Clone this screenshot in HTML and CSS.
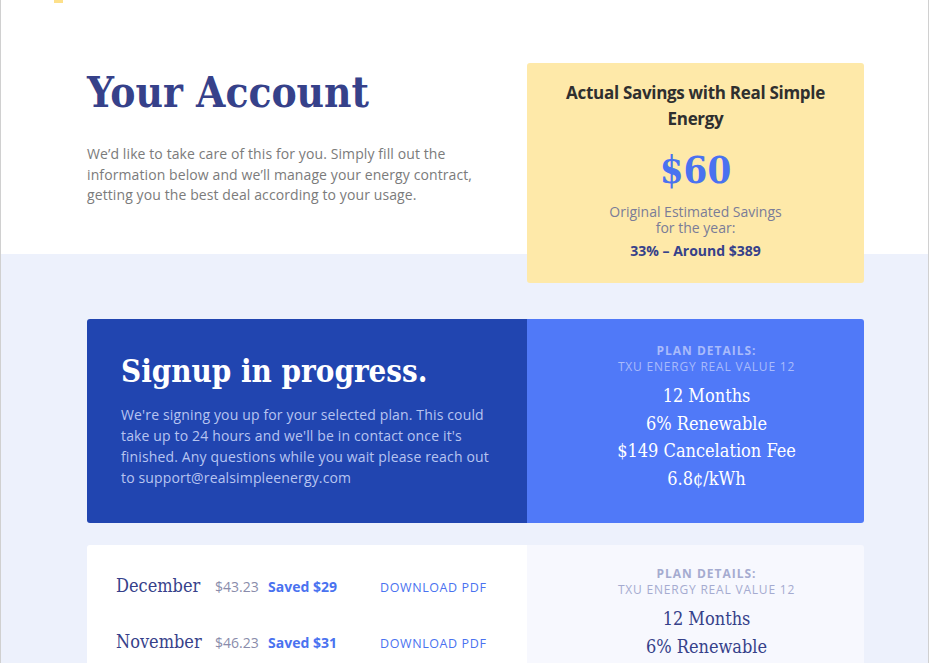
FILE: index.html
```html
<!DOCTYPE html>
<html lang="en">
<head>
<meta charset="utf-8">
<title>Your Account</title>
<link rel="stylesheet" href="styles.css">
</head>
<body>
<div class="frame">
  <div class="accent"></div>
  <div class="container">
    <section class="hero">
      <div class="intro">
        <h1 class="title">Your Account</h1>
        <p class="lead">We’d like to take care of this for you. Simply fill out the information below and we’ll manage your energy contract, getting you the best deal according to your usage.</p>
      </div>
      <aside class="savings">
        <h2 class="savings-title">Actual Savings with Real Simple Energy</h2>
        <div class="savings-amount">$60</div>
        <p class="savings-note">Original Estimated Savings<br>for the year:</p>
        <p class="savings-orig">33% – Around $389</p>
      </aside>
    </section>

    <section class="card card-progress">
      <div class="card-main">
        <h2 class="progress-title">Signup in progress.</h2>
        <p class="progress-text">We're signing you up for your selected plan. This could take up to 24 hours and we'll be in contact once it's finished. Any questions while you wait please reach out to support@realsimpleenergy.com</p>
      </div>
      <div class="plan plan-dark">
        <div class="plan-label">PLAN DETAILS:</div>
        <div class="plan-name">TXU ENERGY REAL VALUE 12</div>
        <ul class="plan-list">
          <li>12 Months</li>
          <li>6% Renewable</li>
          <li>$149 Cancelation Fee</li>
          <li>6.8¢/kWh</li>
        </ul>
      </div>
    </section>

    <section class="card card-history">
      <div class="bills">
        <div class="bill">
          <span class="bill-month">December</span>
          <span class="bill-amount">$43.23</span>
          <span class="bill-saved">Saved $29</span>
          <a class="bill-pdf" href="#">DOWNLOAD PDF</a>
        </div>
        <div class="bill">
          <span class="bill-month">November</span>
          <span class="bill-amount">$46.23</span>
          <span class="bill-saved">Saved $31</span>
          <a class="bill-pdf" href="#">DOWNLOAD PDF</a>
        </div>
      </div>
      <div class="plan plan-light">
        <div class="plan-label">PLAN DETAILS:</div>
        <div class="plan-name">TXU ENERGY REAL VALUE 12</div>
        <ul class="plan-list">
          <li>12 Months</li>
          <li>6% Renewable</li>
          <li>$149 Cancelation Fee</li>
          <li>6.8¢/kWh</li>
        </ul>
      </div>
    </section>
  </div>
</div>
</body>
</html>
```

FILE: styles.css
```css
* { box-sizing: border-box; }
html, body { margin: 0; padding: 0; }
body {
  font-family: "Open Sans", "Liberation Sans", sans-serif;
  background: #fff;
  height: 663px;
  overflow: hidden;
}
.frame {
  width: 929px;
  min-height: 663px;
  border-left: 1px solid #d0d0d0;
  border-right: 1px solid #d0d0d0;
  background: linear-gradient(#ffffff 0, #ffffff 254px, #edf1fc 254px);
}
.accent {
  width: 9px;
  height: 3px;
  margin-left: 53px;
  background: #fde08a;
}
.serif {
  font-family: "DejaVu Serif Condensed", "DejaVu Serif", serif;
}
.container {
  width: 777px;
  margin-left: 86px;
  padding-top: 60px;
}
.hero {
  display: grid;
  grid-template-columns: 440px 337px;
}
.title {
  margin: 0;
  padding-top: 4px;
  font-family: "DejaVu Serif Condensed", "DejaVu Serif", serif;
  font-stretch: condensed;
  font-weight: bold;
  font-size: 42px;
  line-height: 52px;
  color: #36418a;
}
.lead {
  margin: 25px 0 0;
  width: 410px;
  font-size: 14px;
  line-height: 20.5px;
  letter-spacing: 0.1px;
  color: #7b7b7b;
}
.savings {
  height: 220px;
  background: #fee9a9;
  border-radius: 3px;
  text-align: center;
  padding: 17px 30px 0;
}
.savings-title {
  margin: 0;
  font-size: 17px;
  line-height: 26px;
  font-weight: 700;
  color: #2f2f2f;
  letter-spacing: -0.3px;
}
.savings-amount {
  margin-top: 13px;
  font-family: "DejaVu Serif Condensed", "DejaVu Serif", serif;
  font-stretch: condensed;
  font-weight: bold;
  font-size: 38px;
  line-height: 50px;
  color: #4a72f0;
}
.savings-note {
  margin: 9px 0 0;
  font-size: 14px;
  line-height: 16px;
  color: #7a7c98;
}
.savings-orig {
  margin: 5px 0 0;
  font-size: 14px;
  line-height: 20px;
  font-weight: 700;
  color: #36418a;
}
.card {
  display: grid;
  grid-template-columns: 440px 337px;
  border-radius: 3px;
  overflow: hidden;
}
.card-progress {
  margin-top: 36px;
  height: 204px;
}
.card-main {
  background: #2145b0;
  padding: 30px 30px 0 34px;
}
.progress-title {
  margin: 0;
  font-family: "DejaVu Serif Condensed", "DejaVu Serif", serif;
  font-stretch: condensed;
  font-weight: bold;
  font-size: 31px;
  line-height: 44px;
  color: #ffffff;
}
.progress-text {
  margin: 11px 0 0;
  font-size: 14px;
  line-height: 21px;
  letter-spacing: 0.15px;
  color: #b7c4f0;
}
.plan {
  text-align: center;
  padding-top: 24px;
  padding-left: 22px;
}
.plan-dark { background: #5079f8; }
.plan-light { background: #f7f8fe; padding-top: 21px; }
.plan-label {
  font-size: 12px;
  line-height: 16px;
  font-weight: 700;
  letter-spacing: 1px;
}
.plan-name {
  font-size: 12px;
  line-height: 16px;
  letter-spacing: 0.8px;
}
.plan-dark .plan-label, .plan-dark .plan-name { color: #a9bbfb; }
.plan-light .plan-label, .plan-light .plan-name { color: #a5abd0; }
.plan-list {
  list-style: none;
  margin: 7px 0 0;
  padding: 0;
  font-family: "DejaVu Serif Condensed", "DejaVu Serif", serif;
  font-stretch: condensed;
  font-size: 18px;
  line-height: 27.7px;
}
.plan-dark .plan-list { color: #ffffff; }
.plan-light .plan-list { color: #36418a; }
.card-history {
  margin-top: 22px;
  height: 200px;
}
.bills {
  background: #ffffff;
  padding: 30px 0 0 29px;
}
.bill {
  display: grid;
  grid-template-columns: 99px 53px 112px auto;
  align-items: baseline;
  height: 56px;
}
.bill-month {
  font-family: "DejaVu Serif Condensed", "DejaVu Serif", serif;
  font-stretch: condensed;
  font-size: 18px;
  color: #36418a;
}
.bill-amount {
  font-size: 14px;
  color: #8a8cab;
}
.bill-saved {
  font-size: 14px;
  font-weight: 700;
  color: #4a72f0;
}
.bill-pdf {
  font-size: 12.5px;
  letter-spacing: 0.6px;
  color: #4a72f0;
  text-decoration: none;
}
```
